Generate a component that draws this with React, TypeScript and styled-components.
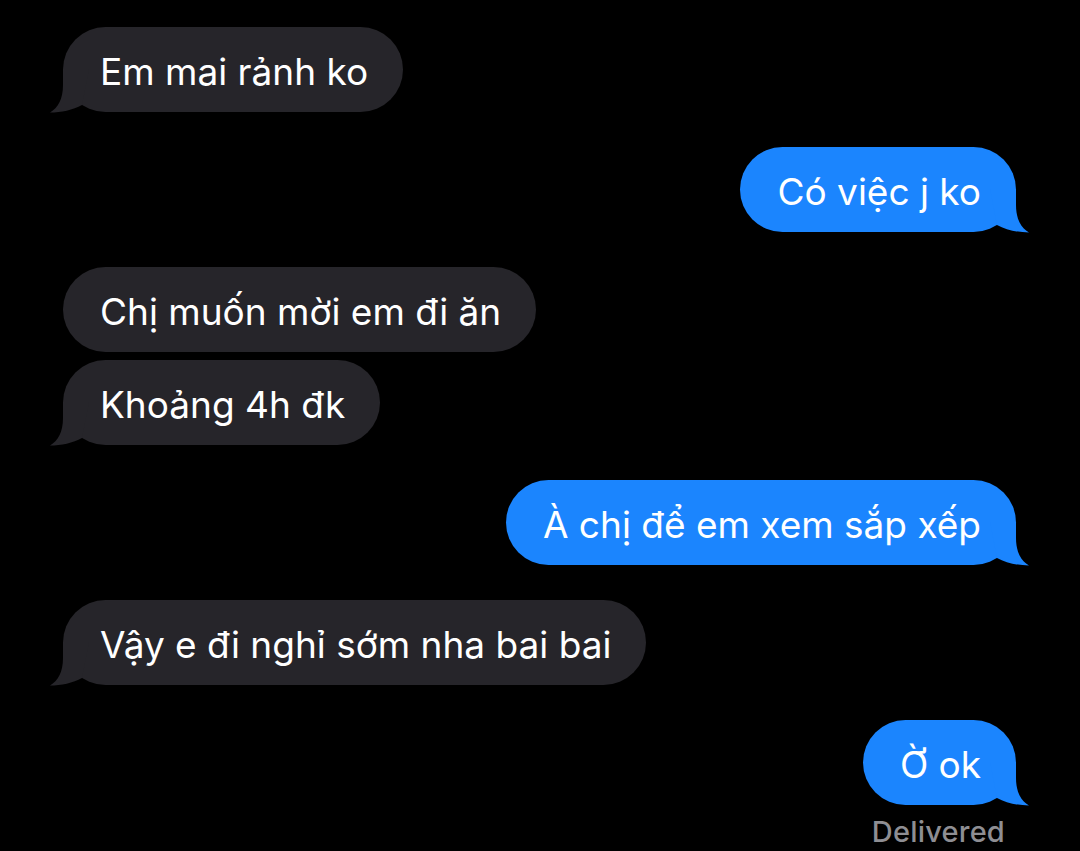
import React from "react";
import styled, { createGlobalStyle } from "styled-components";

const Global = createGlobalStyle`
  html, body { margin: 0; padding: 0; background: #000; }
  body { font-family: Inter, "Noto Sans", sans-serif; -webkit-font-smoothing: antialiased; }
`;

const Thread = styled.div`
  display: flex;
  flex-direction: column;
  padding: 27px 64px 0 63px;
  width: 1080px;
  height: 851px;
  box-sizing: border-box;
  background: #000;
  overflow: hidden;
`;

const Row = styled.div<{ $mine: boolean; $grouped: boolean }>`
  display: flex;
  justify-content: ${(p) => (p.$mine ? "flex-end" : "flex-start")};
  margin-top: ${(p) => (p.$grouped ? "8px" : "35px")};
  &:first-child { margin-top: 0; }
`;

const Bubble = styled.div<{ $mine: boolean }>`
  position: relative;
  height: 85px;
  box-sizing: border-box;
  display: flex;
  align-items: center;
  padding: 3px 35px 0 37px;
  border-radius: 42.5px;
  background: ${(p) => (p.$mine ? "#1b85fe" : "#26252a")};
  color: #fff;
  font-size: 37px;
  letter-spacing: 0;
  white-space: nowrap;
`;

const Tail = styled.svg<{ $mine: boolean }>`
  position: absolute;
  bottom: -1px;
  width: 50px;
  height: 50px;
  ${(p) => (p.$mine ? "right: -14px; transform: scaleX(-1);" : "left: -14px;")}
`;

const Status = styled.div`
  align-self: flex-end;
  margin-top: 9px;
  margin-right: 11px;
  color: #8e8e93;
  font-size: 29px;
  font-weight: 500;
  letter-spacing: 0.2px;
`;

type Msg = { text: string; mine: boolean; grouped?: boolean; tail: boolean };

const messages: Msg[] = [
  { text: "Em mai rảnh ko", mine: false, tail: true },
  { text: "Có việc j ko", mine: true, tail: true },
  { text: "Chị muốn mời em đi ăn", mine: false, tail: false },
  { text: "Khoảng 4h đk", mine: false, grouped: true, tail: true },
  { text: "À chị để em xem sắp xếp", mine: true, tail: true },
  { text: "Vậy e đi nghỉ sớm nha bai bai", mine: false, tail: true },
  { text: "Ờ ok", mine: true, tail: true },
];

function BubbleTail({ mine }: { mine: boolean }) {
  return (
    <Tail $mine={mine} viewBox="0 0 50 50">
      <path
        d="M14 6 L14 22 C14 36 9 45 1 49.5 C12 49.5 24 47 33 42 L40 6 Z"
        fill={mine ? "#1b85fe" : "#26252a"}
      />
    </Tail>
  );
}

export default function App() {
  return (
    <>
      <Global />
      <Thread>
        {messages.map((m, i) => (
          <Row key={i} $mine={m.mine} $grouped={!!m.grouped}>
            <Bubble $mine={m.mine}>
              {m.text}
              {m.tail && <BubbleTail mine={m.mine} />}
            </Bubble>
          </Row>
        ))}
        <Status>Delivered</Status>
      </Thread>
    </>
  );
}
